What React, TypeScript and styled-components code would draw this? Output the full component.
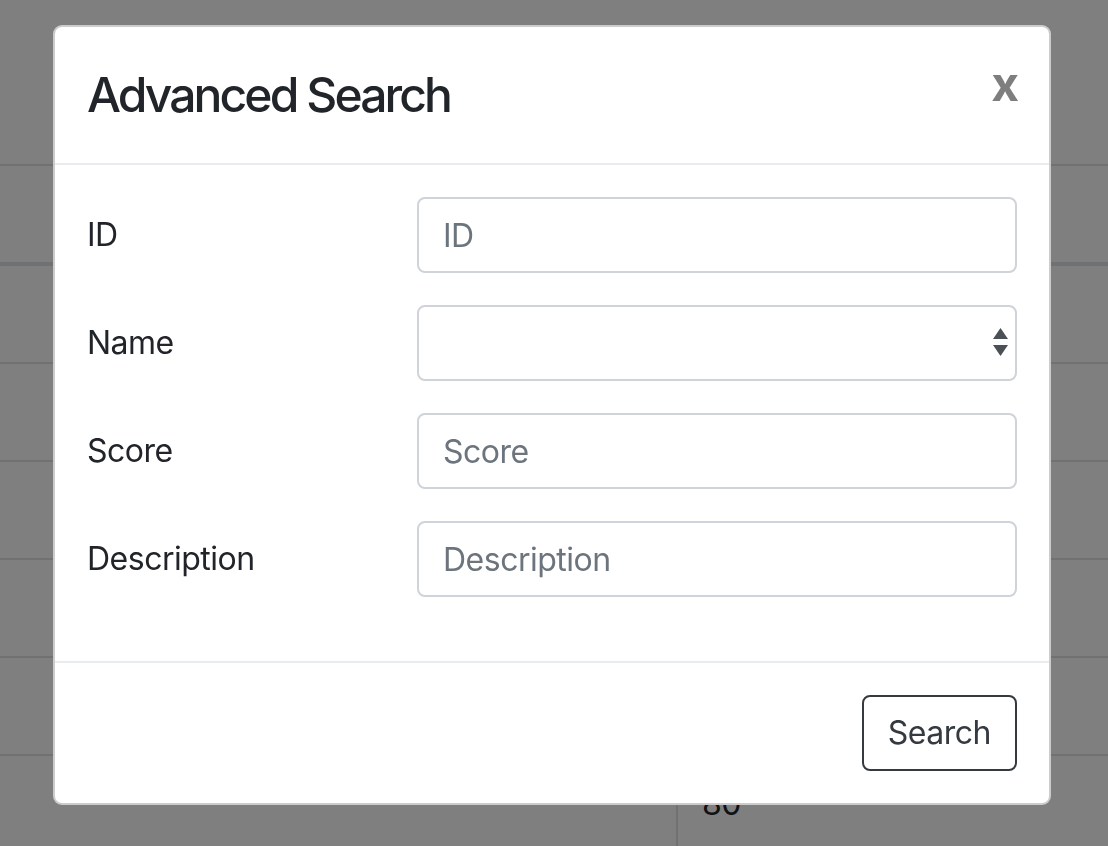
import styled, { createGlobalStyle } from 'styled-components';

const GlobalStyle = createGlobalStyle`
  html, body {
    margin: 0;
    padding: 0;
    background: #fff;
  }
  body {
    font-family: 'Inter', 'Liberation Sans', sans-serif;
    color: #212529;
    overflow: hidden;
  }
`;

const Page = styled.div`
  padding-top: 164px;
  width: 1108px;
  height: 846px;
  box-sizing: border-box;
`;

const Table = styled.table`
  width: 100%;
  border-collapse: collapse;
  font-size: 32px;
  line-height: 48px;
  letter-spacing: -0.5px;
`;

const Cell = styled.td<{ $first?: boolean; $head?: boolean }>`
  padding: 24px;
  width: ${p => (p.$first ? '628px' : 'auto')};
  height: 48px;
  box-sizing: content-box;
  border-top: 2px solid #dee2e6;
  border-bottom: ${p => (p.$head ? '4px solid #dee2e6' : 'none')};
  border-left: ${p => (p.$first ? 'none' : '2px solid #dee2e6')};
  font-weight: ${p => (p.$head ? 700 : 400)};
  text-align: left;
  vertical-align: top;
`;

const Backdrop = styled.div`
  position: fixed;
  inset: 0;
  background: rgba(0, 0, 0, 0.5);
`;

const Dialog = styled.div`
  position: fixed;
  top: 25px;
  left: 53px;
  width: 998px;
  box-sizing: border-box;
  background: #fff;
  border: 2px solid rgba(0, 0, 0, 0.2);
  border-radius: 9px;
  display: flex;
  flex-direction: column;
`;

const Header = styled.div`
  display: flex;
  align-items: flex-start;
  justify-content: space-between;
  padding: 32px;
  border-bottom: 2px solid #e9ecef;
`;

const Title = styled.h4`
  margin: 0;
  font-size: 48px;
  line-height: 72px;
  font-weight: 500;
  letter-spacing: -2.9px;
  color: #212529;
`;

const Close = styled.button`
  border: 0;
  background: transparent;
  padding: 32px;
  margin: -31px -34px -32px auto;
  font-family: inherit;
  font-size: 48px;
  font-weight: 700;
  line-height: 1;
  color: #000;
  opacity: 0.5;
  cursor: pointer;
`;

const Body = styled.div`
  padding: 32px;
`;

const Row = styled.div`
  display: grid;
  grid-template-columns: 330px 1fr;
  margin: 0 -30px 32px;
`;

const Label = styled.label`
  padding: 14px 30px 0;
  font-size: 32px;
  line-height: 48px;
  letter-spacing: -0.5px;
  color: #212529;
`;

const Field = styled.div`
  position: relative;
  padding: 0 30px;
`;

const Input = styled.input`
  display: block;
  width: 100%;
  height: 76px;
  box-sizing: border-box;
  padding: 12px 24px;
  font-family: inherit;
  font-size: 32px;
  line-height: 48px;
  letter-spacing: -0.5px;
  color: #495057;
  background: #fff;
  border: 2px solid #ced4da;
  border-radius: 8px;
  outline: none;
  &::placeholder {
    color: #6c757d;
  }
`;

const Select = styled.select`
  display: block;
  width: 100%;
  height: 76px;
  box-sizing: border-box;
  padding: 12px 24px;
  font-family: inherit;
  font-size: 32px;
  color: #495057;
  background: #fff;
  border: 2px solid #ced4da;
  border-radius: 8px;
  outline: none;
  appearance: none;
`;

const Arrows = styled.svg`
  position: absolute;
  right: 39px;
  top: 23px;
  pointer-events: none;
`;

const Footer = styled.div`
  display: flex;
  justify-content: flex-end;
  padding: 24px;
  border-top: 2px solid #e9ecef;
`;

const Button = styled.button`
  margin: 8px;
  padding: 12px 24px;
  font-family: inherit;
  font-size: 32px;
  line-height: 48px;
  letter-spacing: -0.5px;
  color: #343a40;
  background: transparent;
  border: 2px solid #343a40;
  border-radius: 8px;
  cursor: pointer;
`;

const scores = ['95', '72', '88', '64', '91', '80'];

const fields = [
  { label: 'ID', placeholder: 'ID' },
  { label: 'Name', select: true },
  { label: 'Score', placeholder: 'Score' },
  { label: 'Description', placeholder: 'Description' },
];

export default function App() {
  return (
    <>
      <GlobalStyle />
      <Page>
        <Table>
          <thead>
            <tr>
              <Cell as="th" $first $head />
              <Cell as="th" $head />
            </tr>
          </thead>
          <tbody>
            {scores.map((s, i) => (
              <tr key={i}>
                <Cell $first />
                <Cell>{s}</Cell>
              </tr>
            ))}
          </tbody>
        </Table>
      </Page>
      <Backdrop />
      <Dialog role="dialog">
        <Header>
          <Title>Advanced Search</Title>
          <Close type="button">x</Close>
        </Header>
        <Body>
          {fields.map(f => (
            <Row key={f.label}>
              <Label>{f.label}</Label>
              <Field>
                {f.select ? (
                  <>
                    <Select defaultValue="">
                      <option value=""></option>
                    </Select>
                    <Arrows width="15" height="28" viewBox="0 0 15 28">
                      <path d="M7.5 0 L15 11 L0 11 Z" fill="#4b5056" />
                      <path d="M0 17 L15 17 L7.5 28 Z" fill="#4b5056" />
                    </Arrows>
                  </>
                ) : (
                  <Input placeholder={f.placeholder} />
                )}
              </Field>
            </Row>
          ))}
        </Body>
        <Footer>
          <Button type="button">Search</Button>
        </Footer>
      </Dialog>
    </>
  );
}
